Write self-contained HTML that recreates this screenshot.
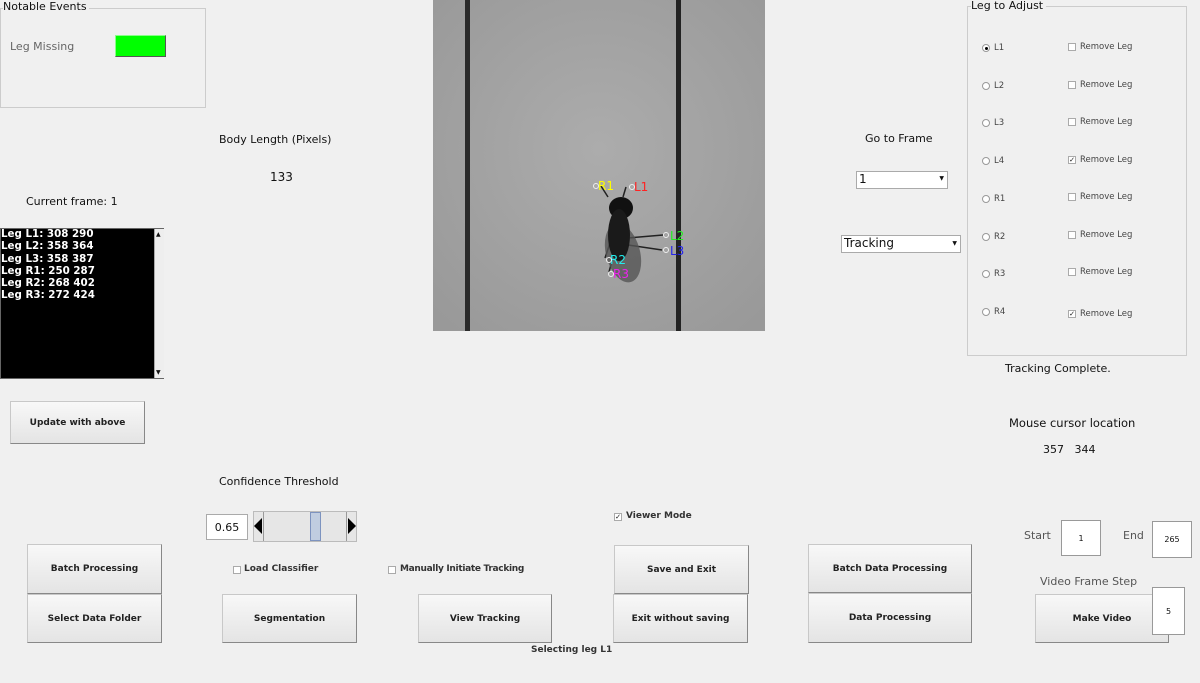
<!DOCTYPE html>
<html><head><meta charset="utf-8"><style>
*{box-sizing:border-box;margin:0;padding:0}
body{width:1200px;height:683px;background:#f0f0f0;position:relative;overflow:hidden;font-family:"DejaVu Sans","Liberation Sans",sans-serif;color:#111}
.a{position:absolute}
.t{position:absolute;font-size:11px;white-space:nowrap}
.btn{position:absolute;background:linear-gradient(#f8f8f8,#e4e4e4);border:1px solid #c8c8c8;border-right-color:#888;border-bottom-color:#888;font-size:9px;font-weight:bold;display:flex;align-items:center;justify-content:center;color:#222}
.box{position:absolute;background:#fff;border:1px solid #999;font-size:8px;display:flex;align-items:center;justify-content:center}
.rad{position:absolute;width:8px;height:8px;border:1px solid #999;border-radius:50%;background:#fff}
.chk{position:absolute;width:8px;height:8px;border:1px solid #aaa;background:#fff;font-size:7px;line-height:6px;text-align:center}
.sm{position:absolute;font-size:8.5px;color:#444;white-space:nowrap}
.bl{position:absolute;font-size:9px;font-weight:bold;color:#333;white-space:nowrap}
</style></head><body>
<div class="a" style="left:0;top:8px;width:206px;height:100px;border:1px solid #ccc"></div>
<div class="t" style="left:3px;top:0;background:#f0f0f0;padding-right:2px">Notable Events</div>
<div class="t" style="left:10px;top:40px;color:#666">Leg Missing</div>
<div class="a" style="left:115px;top:35px;width:51px;height:22px;background:#00ff00;border:1px solid #555;border-top-color:#8f8;border-left-color:#8f8"></div>

<div class="t" style="left:219px;top:133px">Body Length (Pixels)</div>
<div class="t" style="left:270px;top:170px;font-size:12px">133</div>
<div class="t" style="left:26px;top:195px">Current frame: 1</div>

<div class="a" style="left:0;top:228px;width:164px;height:151px;background:#000;border:1px solid #666"></div>
<div class="a" style="left:1px;top:228px;color:#fff;font-size:10.3px;font-weight:bold;line-height:12.3px;white-space:pre">Leg L1: 308 290
Leg L2: 358 364
Leg L3: 358 387
Leg R1: 250 287
Leg R2: 268 402
Leg R3: 272 424</div>
<div class="a" style="left:154px;top:229px;width:10px;height:149px;background:#eee;border-left:1px solid #aaa"></div>
<div class="a" style="left:156px;top:231px;font-size:6px">▲</div>
<div class="a" style="left:156px;top:369px;font-size:6px">▼</div>

<div class="btn" style="left:10px;top:401px;width:135px;height:43px">Update with above</div>

<svg class="a" style="left:433px;top:0" width="332" height="331" viewBox="0 0 332 331">
<defs><radialGradient id="g" cx="50%" cy="45%" r="70%"><stop offset="0" stop-color="#acacac"/><stop offset="1" stop-color="#999"/></radialGradient></defs>
<rect width="332" height="331" fill="url(#g)"/>
<rect x="32" y="0" width="5" height="331" fill="#2a2a2a"/>
<rect x="243" y="0" width="5" height="331" fill="#222"/>
<path d="M175 197 L168 186 M190 197 L193 187 M195 238 L230 235 M195 245 L229 250 M178 240 L172 258 M182 250 L176 272" stroke="#222" stroke-width="1.5" fill="none"/>
<ellipse cx="190" cy="253" rx="17" ry="30" fill="#555" opacity=".8" transform="rotate(-15 190 253)"/>
<ellipse cx="188" cy="208" rx="12" ry="11" fill="#111"/>
<ellipse cx="186" cy="235" rx="11" ry="26" fill="#1a1a1a"/>
<g font-size="12" font-family="DejaVu Sans">
<text x="165" y="190" fill="#ff0">R1</text><text x="201" y="191" fill="#f22">L1</text>
<text x="237" y="240" fill="#2e2">L2</text><text x="237" y="255" fill="#22e">L3</text>
<text x="177" y="264" fill="#2ee">R2</text><text x="180" y="278" fill="#e2e">R3</text></g>
<g stroke="#eee" fill="none"><circle cx="163" cy="186" r="2.5"/><circle cx="199" cy="187" r="2.5"/><circle cx="233" cy="235" r="2.5"/><circle cx="233" cy="250" r="2.5"/><circle cx="176" cy="260" r="2.5"/><circle cx="178" cy="274" r="2.5"/></g>
</svg>

<div class="t" style="left:865px;top:132px">Go to Frame</div>
<div class="a" style="left:856px;top:171px;width:92px;height:18px;background:#fff;border:1px solid #aaa;font-size:12px;padding-left:2px">1<span style="position:absolute;right:3px;top:3px;font-size:6px">▼</span></div>
<div class="a" style="left:841px;top:235px;width:120px;height:18px;background:#fff;border:1px solid #aaa;font-size:12px;padding-left:2px">Tracking<span style="position:absolute;right:3px;top:4px;font-size:6px">▼</span></div>

<div class="a" style="left:967px;top:6px;width:220px;height:350px;border:1px solid #ccc"></div>
<div class="t" style="left:971px;top:-1px;background:#f0f0f0;padding-right:3px">Leg to Adjust</div>
<div class="rad" style="left:982px;top:44px"><div class="a" style="left:2px;top:2px;width:3px;height:3px;border-radius:50%;background:#000"></div></div><div class="sm" style="left:994px;top:43px">L1</div>
<div class="rad" style="left:982px;top:82px"></div><div class="sm" style="left:994px;top:81px">L2</div>
<div class="rad" style="left:982px;top:119px"></div><div class="sm" style="left:994px;top:118px">L3</div>
<div class="rad" style="left:982px;top:157px"></div><div class="sm" style="left:994px;top:156px">L4</div>
<div class="rad" style="left:982px;top:195px"></div><div class="sm" style="left:994px;top:194px">R1</div>
<div class="rad" style="left:982px;top:233px"></div><div class="sm" style="left:994px;top:232px">R2</div>
<div class="rad" style="left:982px;top:270px"></div><div class="sm" style="left:994px;top:269px">R3</div>
<div class="rad" style="left:982px;top:308px"></div><div class="sm" style="left:994px;top:307px">R4</div>
<div class="chk" style="left:1068px;top:43px"></div><div class="sm" style="left:1080px;top:42px">Remove Leg</div>
<div class="chk" style="left:1068px;top:81px"></div><div class="sm" style="left:1080px;top:80px">Remove Leg</div>
<div class="chk" style="left:1068px;top:118px"></div><div class="sm" style="left:1080px;top:117px">Remove Leg</div>
<div class="chk" style="left:1068px;top:156px">✓</div><div class="sm" style="left:1080px;top:155px">Remove Leg</div>
<div class="chk" style="left:1068px;top:193px"></div><div class="sm" style="left:1080px;top:192px">Remove Leg</div>
<div class="chk" style="left:1068px;top:231px"></div><div class="sm" style="left:1080px;top:230px">Remove Leg</div>
<div class="chk" style="left:1068px;top:268px"></div><div class="sm" style="left:1080px;top:267px">Remove Leg</div>
<div class="chk" style="left:1068px;top:310px">✓</div><div class="sm" style="left:1080px;top:309px">Remove Leg</div>
<div class="t" style="left:1005px;top:362px">Tracking Complete.</div>

<div class="t" style="left:1009px;top:416px;font-size:11.5px">Mouse cursor location</div>
<div class="t" style="left:1043px;top:443px">357&nbsp;&nbsp; 344</div>

<div class="t" style="left:219px;top:475px">Confidence Threshold</div>
<div class="a" style="left:206px;top:514px;width:42px;height:26px;background:#fff;border:1px solid #aaa;font-size:11px;display:flex;align-items:center;justify-content:center">0.65</div>
<div class="a" style="left:253px;top:511px;width:104px;height:31px;background:#e6e6e6;border:1px solid #bbb"></div>
<div class="a" style="left:263px;top:512px;width:84px;height:29px;border-left:1px solid #999;border-right:1px solid #999"></div>
<div class="a" style="left:254px;top:518px;width:0;height:0;border-top:8px solid transparent;border-bottom:8px solid transparent;border-right:8px solid #000"></div>
<div class="a" style="left:348px;top:518px;width:0;height:0;border-top:8px solid transparent;border-bottom:8px solid transparent;border-left:8px solid #000"></div>
<div class="a" style="left:310px;top:512px;width:11px;height:29px;background:#c0cde0;border:1px solid #7d93bf"></div>

<div class="chk" style="left:614px;top:513px">✓</div><div class="bl" style="left:626px;top:511px">Viewer Mode</div>
<div class="chk" style="left:233px;top:566px"></div><div class="bl" style="left:244px;top:564px">Load Classifier</div>
<div class="chk" style="left:388px;top:566px"></div><div class="bl" style="left:400px;top:564px;letter-spacing:-0.3px">Manually Initiate Tracking</div>

<div class="btn" style="left:27px;top:544px;width:135px;height:50px">Batch Processing</div>
<div class="btn" style="left:27px;top:594px;width:135px;height:49px">Select Data Folder</div>
<div class="btn" style="left:222px;top:594px;width:135px;height:49px">Segmentation</div>
<div class="btn" style="left:418px;top:594px;width:134px;height:49px">View Tracking</div>
<div class="btn" style="left:614px;top:545px;width:135px;height:49px">Save and Exit</div>
<div class="btn" style="left:613px;top:594px;width:135px;height:49px">Exit without saving</div>
<div class="btn" style="left:808px;top:544px;width:164px;height:49px">Batch Data Processing</div>
<div class="btn" style="left:808px;top:593px;width:164px;height:50px">Data Processing</div>
<div class="btn" style="left:1035px;top:594px;width:134px;height:49px">Make Video</div>
<div class="bl" style="left:531px;top:645px">Selecting leg L1</div>

<div class="t" style="left:1024px;top:529px;color:#555">Start</div>
<div class="box" style="left:1061px;top:520px;width:40px;height:36px">1</div>
<div class="t" style="left:1123px;top:529px;color:#555">End</div>
<div class="box" style="left:1152px;top:521px;width:40px;height:37px">265</div>
<div class="t" style="left:1040px;top:575px;color:#555">Video Frame Step</div>
<div class="box" style="left:1152px;top:587px;width:33px;height:48px">5</div>
</body></html>
